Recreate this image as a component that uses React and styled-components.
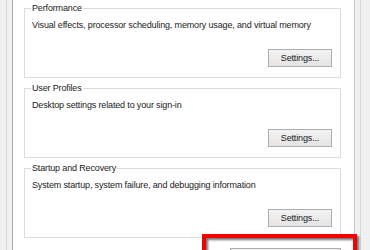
import React from 'react'
import styled, { createGlobalStyle } from 'styled-components'

const Global = createGlobalStyle`
  html, body {
    margin: 0;
    padding: 0;
    background: #f0f0f0;
    overflow: hidden;
  }
  body {
    font-family: "Liberation Sans", Arial, sans-serif;
    font-size: 9px;
    letter-spacing: -0.15px;
    color: #1a1a1a;
  }
`

const Dialog = styled.div`
  display: flex;
  height: 250px;
  width: 370px;
  overflow: hidden;
`

const Edge = styled.div`
  flex: none;
  width: ${p => p.$w}px;
  background: linear-gradient(
    to right,
    #f0f0f0 ${p => p.$line}px,
    #d6d6d6 ${p => p.$line}px,
    #d6d6d6 ${p => p.$line + 1}px,
    #f0f0f0 ${p => p.$line + 1}px
  );
`

const TabPage = styled.div`
  flex: 1;
  background: #fff;
  border-left: 1px solid #a9a9a9;
  border-right: 1px solid #c9c9c9;
  padding: 2px 13px 0 11px;
  display: flex;
  flex-direction: column;
  gap: 4px;
`

const Group = styled.fieldset`
  margin: 0;
  border: 1px solid #dcdcdc;
  padding: 5px 8px 10px 7px;
  display: flex;
  flex-direction: column;
`

const Title = styled.legend`
  padding: 0 1px;
  margin-left: -1px;
  line-height: 12px;
`

const Description = styled.div`
  line-height: 12px;
  height: 12px;
  white-space: nowrap;
  margin-bottom: 18px;
`

const Button = styled.button`
  align-self: flex-end;
  width: ${p => p.$w}px;
  height: 18px;
  padding: 0;
  font: inherit;
  letter-spacing: inherit;
  color: #1a1a1a;
  background: linear-gradient(#f2f2f2, #e4e4e4);
  border: 1px solid #adadad;
  border-radius: 0;
`

const Footer = styled.div`
  margin-top: 6px;
  display: flex;
  justify-content: flex-end;
`

const FooterButton = styled.div`
  position: relative;
  display: flex;
`

const Highlight = styled.div`
  position: absolute;
  right: -16px;
  top: -14px;
  width: 155px;
  height: 60px;
  box-sizing: border-box;
  border: 4px solid #f30000;
  filter: drop-shadow(2px 2px 1px rgba(0, 0, 0, 0.55));
  pointer-events: none;
`

const groups = [
  {
    title: 'Performance',
    text: 'Visual effects, processor scheduling, memory usage, and virtual memory',
  },
  {
    title: 'User Profiles',
    text: 'Desktop settings related to your sign-in',
  },
  {
    title: 'Startup and Recovery',
    text: 'System startup, system failure, and debugging information',
  },
]

export default function App() {
  return (
    <>
      <Global />
      <Dialog>
        <Edge $w={12} $line={6} />
        <TabPage>
          {groups.map(g => (
            <Group key={g.title}>
              <Title>{g.title}</Title>
              <Description>{g.text}</Description>
              <Button $w={64}>Settings...</Button>
            </Group>
          ))}
          <Footer>
            <FooterButton>
              <Button $w={111}>Environment Variables...</Button>
              <Highlight />
            </FooterButton>
          </Footer>
        </TabPage>
        <Edge $w={15} $line={5} />
      </Dialog>
    </>
  )
}
